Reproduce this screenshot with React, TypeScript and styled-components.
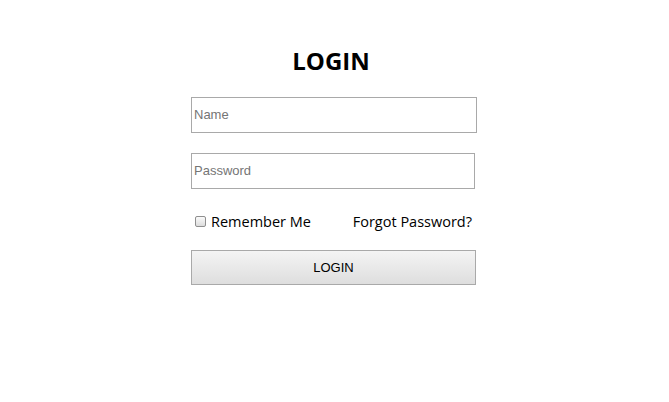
import React from 'react';
import styled, { createGlobalStyle } from 'styled-components';

const GlobalStyle = createGlobalStyle`
  html, body {
    margin: 0;
    padding: 0;
    background: #fff;
  }
  body {
    font-family: 'Open Sans', 'Noto Sans', sans-serif;
  }
`;

const Page = styled.div`
  width: 669px;
  height: 402px;
  display: flex;
  justify-content: center;
  padding-top: 45px;
  box-sizing: border-box;
`;

const Form = styled.form`
  width: 286px;
  display: flex;
  flex-direction: column;
  margin-left: -1px;
`;

const Title = styled.h1`
  margin: 0 0 20px;
  padding-right: 6px;
  text-align: center;
  font-family: 'Open Sans', sans-serif;
  font-weight: 700;
  font-size: 24px;
  line-height: 32px;
  color: #000;
`;

const TextInput = styled.input<{ $width: number }>`
  width: ${({ $width }) => $width}px;
  height: 36px;
  box-sizing: border-box;
  margin: 0 0 20px;
  padding: 0 2px 1px;
  border: 1px solid #a9a9a9;
  font-family: 'Liberation Sans', Arial, sans-serif;
  font-size: 13px;
  color: #000;
  background: #fff;
  outline: none;
  ::placeholder {
    color: #757575;
  }
`;

const OptionsRow = styled.div`
  display: flex;
  align-items: center;
  justify-content: space-between;
  padding: 0 5px 0 4px;
  margin: 0 0 17px;
  height: 24px;
  font-family: 'Open Sans', sans-serif;
  font-size: 14.5px;
  color: #000;
`;

const CheckLabel = styled.label`
  display: flex;
  align-items: center;
  gap: 5px;
`;

const Box = styled.span`
  width: 11px;
  height: 11px;
  box-sizing: border-box;
  border: 1px solid #8f8f8f;
  border-radius: 2px;
  background: linear-gradient(#fbfbfb, #dcdcdc);
`;

const LinkText = styled.span`
  color: #000;
`;

const Button = styled.button`
  width: 285px;
  height: 35px;
  box-sizing: border-box;
  border: 1px solid #a9a9a9;
  background: linear-gradient(#f4f4f4, #dedede);
  font-family: 'Liberation Sans', Arial, sans-serif;
  font-size: 13px;
  color: #000;
  padding: 0 0 1px;
`;

export default function App() {
  return (
    <>
      <GlobalStyle />
      <Page>
        <Form onSubmit={(e) => e.preventDefault()}>
          <Title>LOGIN</Title>
          <TextInput $width={286} type="text" placeholder="Name" />
          <TextInput $width={284} type="password" placeholder="Password" />
          <OptionsRow>
            <CheckLabel>
              <Box />
              Remember Me
            </CheckLabel>
            <LinkText>Forgot Password?</LinkText>
          </OptionsRow>
          <Button type="submit">LOGIN</Button>
        </Form>
      </Page>
    </>
  );
}
